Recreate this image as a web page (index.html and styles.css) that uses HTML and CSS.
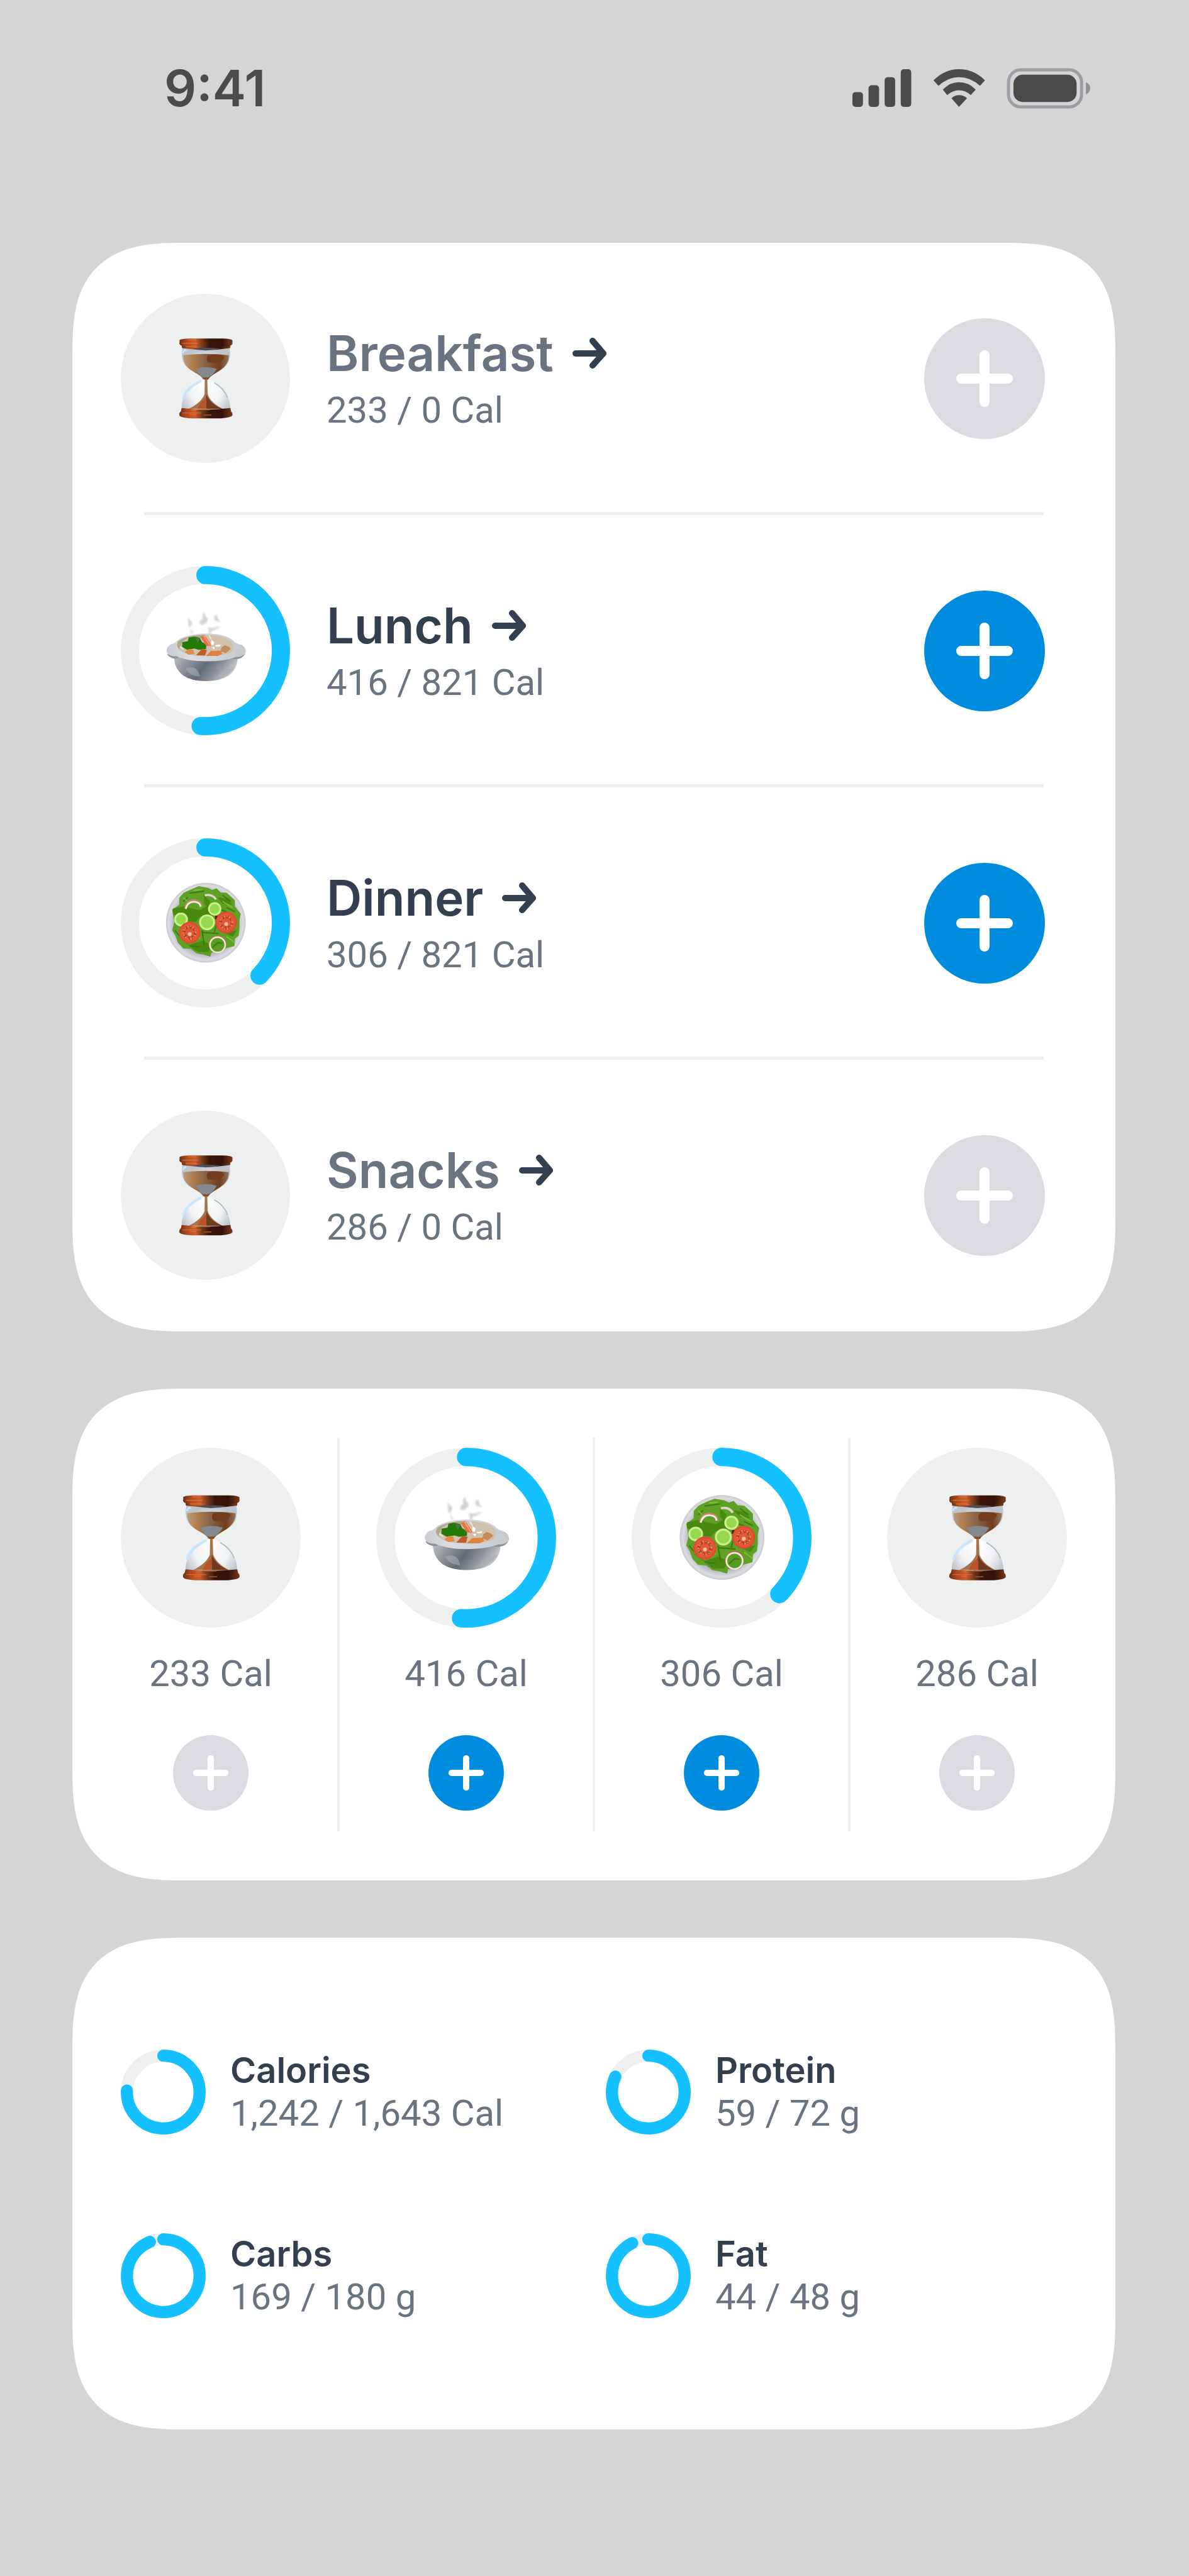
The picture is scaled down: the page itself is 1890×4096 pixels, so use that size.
FILE: index.html
```html
<!DOCTYPE html>
<html lang="en">
<head>
    <meta charset="UTF-8">
    <meta name="viewport" content="width=device-width, initial-scale=1.0">
    <title>Meals</title>
    <link rel="stylesheet" href="styles.css">
</head>
<body>
    <!-- Shared drawings -->
    <svg class="sprite" aria-hidden="true">
        <defs>
            <linearGradient id="wood" x1="0" x2="1" y1="0" y2="0">
                <stop offset="0" stop-color="#6b2f14"/>
                <stop offset="0.14" stop-color="#b04a20"/>
                <stop offset="0.3" stop-color="#cf5a2a"/>
                <stop offset="0.42" stop-color="#7a3d1c"/>
                <stop offset="0.56" stop-color="#3b160a"/>
                <stop offset="0.8" stop-color="#33110a"/>
                <stop offset="1" stop-color="#7a3a1c"/>
            </linearGradient>
            <linearGradient id="sand" x1="0" x2="1" y1="0" y2="0">
                <stop offset="0" stop-color="#b99b7c"/>
                <stop offset="0.2" stop-color="#b07e50"/>
                <stop offset="0.5" stop-color="#866045"/>
                <stop offset="0.8" stop-color="#6f3e1f"/>
                <stop offset="1" stop-color="#94745a"/>
            </linearGradient>
            <radialGradient id="glass" cx="0.5" cy="0.6" r="0.6">
                <stop offset="0" stop-color="#ffffff"/>
                <stop offset="0.6" stop-color="#f1f2f4"/>
                <stop offset="1" stop-color="#bfc4ca"/>
            </radialGradient>
            <linearGradient id="pot" x1="0" x2="1" y1="0" y2="0.3">
                <stop offset="0" stop-color="#bcc0c5"/>
                <stop offset="0.3" stop-color="#8b9096"/>
                <stop offset="0.55" stop-color="#636b77"/>
                <stop offset="0.8" stop-color="#92979d"/>
                <stop offset="1" stop-color="#c3c6ca"/>
            </linearGradient>
            <linearGradient id="rim" x1="0" x2="1" y1="0" y2="0">
                <stop offset="0" stop-color="#c9ccd2"/>
                <stop offset="0.3" stop-color="#dcdde3"/>
                <stop offset="1" stop-color="#c4c9cb"/>
            </linearGradient>
            <radialGradient id="plate" cx="0.5" cy="0.5" r="0.5">
                <stop offset="0.75" stop-color="#a9aeb6"/>
                <stop offset="0.93" stop-color="#dcdde3"/>
                <stop offset="1" stop-color="#c6c9cd"/>
            </radialGradient>
            <filter id="soft" x="-20%" y="-20%" width="140%" height="140%">
                <feGaussianBlur stdDeviation="5"/>
            </filter>

            <g id="hourglass">
                <path d="M346 308 H574 C584 372 560 404 520 425 C495 440 478 452 474 462 C500 474 576 510 578 600 H342 C342 520 410 482 446 462 C440 448 424 438 400 424 C356 402 336 370 346 308 Z" fill="url(#glass)"/>
                <path d="M350 342 Q460 330 570 342 C572 386 540 410 510 427 C488 440 476 450 472 459 H446 C440 446 424 436 402 424 C364 402 348 380 350 342 Z" fill="url(#sand)"/>
                <path d="M470 342 Q530 334 548 350 Q540 374 510 378 H470 Q456 362 470 342 Z" fill="#713d1d"/>
                <path d="M410 408 Q460 392 512 408 Q500 430 482 444 Q460 458 436 444 Q420 430 410 408 Z" fill="#85898f"/>
                <path d="M446 450 H474 Q472 462 460 462 Q450 462 446 450 Z" fill="#8a4a25"/>
                <path d="M454 460 H466 L468 530 Q480 570 540 602 H376 Q440 570 453 530 Z" fill="#a6744c"/>
                <path d="M461 530 Q480 580 540 602 H462 Z" fill="#6e3b1e"/>
                <path d="M432 575 L460 548 L462 602 H420 Z" fill="#b95327"/>
                <path d="M351 550 Q362 504 432 468" fill="none" stroke="#c9e6fa" stroke-width="13" stroke-linecap="round"/>
                <path d="M500 476 Q548 502 564 548" fill="none" stroke="#a9b8c5" stroke-width="5"/>
                <path d="M348 333 Q350 316 366 318" fill="none" stroke="#c9e6fa" stroke-width="8"/>
                <path d="M342 296 H578 L577 308 Q460 326 344 308 Z" fill="url(#wood)"/>
                <path d="M390 310 Q460 302 530 310 Q460 328 390 310 Z" fill="#4b4f5a"/>
                <path d="M332 268 Q340 262 380 261 H540 Q584 262 588 270 V286 Q584 298 560 300 H360 Q334 298 331 286 Z" fill="url(#wood)"/>
                <path d="M372 268 H412 M345 284 H420 M362 300 H415" stroke="#e07a3c" stroke-width="5" opacity=".7"/>
                <path d="M342 598 Q460 612 578 598 L582 616 Q590 620 588 634 Q580 646 530 648 H390 Q336 646 331 634 Q328 622 338 614 Z" fill="url(#wood)"/>
                <path d="M388 610 H412 M384 630 H412 M345 622 H436" stroke="#de7a41" stroke-width="4" opacity=".7"/>
                <path d="M440 606 H482 M450 632 H486" stroke="#91542e" stroke-width="5"/>
            </g>

            <g id="soup">
                <g filter="url(#soft)" fill="#c6c6cf" opacity=".8">
                    <path d="M374 280 Q372 300 392 314 Q396 332 376 342 Q372 310 374 280 Z"/>
                    <path d="M388 340 Q386 356 400 370 L390 372 Q382 356 388 340 Z"/>
                    <path d="M452 266 Q438 282 446 298 Q426 312 430 326 Q450 334 466 312 Q474 296 456 288 Z"/>
                    <path d="M506 280 Q492 296 504 308 L534 318 Q512 300 514 282 Z"/>
                    <path d="M464 338 Q476 352 528 334 Q510 356 486 358 L484 376 L474 376 Q478 354 464 338 Z"/>
                </g>
                <path d="M305 480 H613 Q616 540 570 575 Q528 602 458 602 Q390 602 350 575 Q304 540 305 480 Z" fill="url(#pot)"/>
                <path d="M360 540 Q420 520 430 580 Q380 578 360 540 Z M500 590 Q540 550 600 530 Q570 585 500 590 Z" fill="#a9adb2" opacity=".6"/>
                <path d="M270 470 Q290 500 330 490 L310 478 Z M650 470 Q630 505 580 492 L610 480 Z" fill="#8c9198"/>
                <path d="M460 371 Q560 371 598 412 Q612 422 632 426 Q655 440 652 464 Q640 486 604 485 Q550 506 460 506 Q370 506 316 481 Q280 484 270 462 Q264 440 288 424 Q310 420 322 404 Q370 371 460 371 Z" fill="url(#rim)"/>
                <path d="M457 377 Q550 379 584 412 Q600 434 586 458 Q560 480 457 481 Q360 480 330 450 Q310 428 326 408 Q370 378 457 377 Z" fill="#cfc1ab"/>
                <path d="M326 408 Q370 378 457 377 L440 394 L380 388 L345 410 L330 448 Q312 428 326 408 Z" fill="#b3a48d"/>
                <path d="M345 413 L372 408 L376 390 L404 386 L430 392 L440 412 L462 424 L460 446 L424 450 L404 444 L368 450 L344 436 Z" fill="#237a0a"/>
                <path d="M408 394 L432 392 L420 418 Z" fill="#59714a"/>
                <path d="M433 387 L456 383 L484 424 L482 432 L460 430 Z" fill="#e96f45"/>
                <path d="M450 383 L478 428" stroke="#f5a27f" stroke-width="5"/>
                <path d="M358 462 L376 446 L398 450 L404 470 L376 474 Z" fill="#e08a45"/>
                <path d="M412 476 L440 446 L464 450 L456 478 Z" fill="#bf5d2b"/>
                <path d="M460 480 L484 456 L530 454 L540 470 L516 480 Z" fill="#de8440"/>
                <path d="M535 438 L550 428 L572 436 L580 446 L556 466 L530 458 Z" fill="#c78b59"/>
                <path d="M486 402 L500 412 L496 428 L484 424 Z M504 428 L530 424 L528 434 L508 434 Z M486 438 L502 436 L500 448 Z" fill="#fff"/>
                <path d="M474 380 L486 400 M334 436 L352 448" stroke="#e9e4dc" stroke-width="6"/>
            </g>

            <g id="salad">
                <circle cx="459" cy="453" r="193" fill="url(#plate)"/>
                <path d="M390 290 L425 276 L470 284 L490 294 L512 286 L530 306 L560 308 L580 326 L600 344 L600 374 L628 410 L622 440 L622 480 L618 516 L600 530 L598 566 L560 576 L530 590 L486 598 L482 618 L450 608 L414 602 L388 580 L350 578 L324 550 L312 516 L296 490 L306 450 L300 414 L296 390 L330 366 L330 332 L352 308 Z" fill="#5fa125"/>
                <path d="M300 384 L350 374 L430 392 L470 370 L520 400 L500 420 L430 424 L410 450 L370 446 L300 410 Z M514 330 L560 336 L590 366 L540 360 Z M320 520 L380 560 L440 540 L490 560 L470 594 L420 596 Z M540 500 L610 490 L590 520 Z M450 320 L480 350 L470 380 L450 360 Z" fill="#4a890f"/>
                <path d="M380 310 L450 300 M350 350 L372 330 M520 430 L500 500 M440 500 L520 506 M380 566 L430 570 M560 380 L600 400 M540 320 L580 350 M440 490 L452 560 M310 490 L330 516 M500 380 L560 400" fill="none" stroke="#3d7a10" stroke-width="6"/>
                <path d="M400 296 L440 292 M540 350 L590 380 M400 500 L430 530 M560 520 L600 550 M350 330 L370 350" fill="none" stroke="#7cbb3e" stroke-width="6"/>
                <path d="M360 384 Q368 344 404 346 Q436 350 438 376" fill="none" stroke="#c98865" stroke-width="12"/>
                <path d="M362 386 Q370 350 404 352 Q432 354 434 376" fill="none" stroke="#f3efec" stroke-width="8"/>
                <path d="M454 320 Q490 312 508 340" fill="none" stroke="#e4d2c8" stroke-width="11"/>
                <path d="M504 420 H522 V436 H504 Z" fill="#45180c"/>
                <g fill="#96d94f" stroke="#cdf08a" stroke-width="9">
                    <circle cx="502" cy="386" r="28"/>
                    <circle cx="339" cy="437" r="29"/>
                    <circle cx="465" cy="451" r="34"/>
                </g>
                <g id="tomato">
                    <circle cx="381" cy="501" r="48" fill="#e0583a" stroke="#e54a30" stroke-width="8"/>
                    <circle cx="381" cy="501" r="27" fill="none" stroke="#a9431f" stroke-width="14" stroke-dasharray="10 11"/>
                    <circle cx="381" cy="501" r="30" fill="none" stroke="#eeb069" stroke-width="5" stroke-dasharray="4 9"/>
                    <circle cx="381" cy="508" r="9" fill="#f6b99a"/>
                </g>
                <use href="#tomato" x="177" y="-49"/>
                <circle cx="516" cy="558" r="38" fill="none" stroke="#c5613c" stroke-width="10"/>
                <circle cx="516" cy="560" r="37" fill="#5a9b22" stroke="#ece5dc" stroke-width="8"/>
                <path d="M490 574 L516 550 L540 552" fill="none" stroke="#3d7a10" stroke-width="6"/>
            </g>

            <path id="arrow" d="M5 25 H49 M32 5 L49 25 L32 44" fill="none" stroke="#33404f" stroke-width="10" stroke-linecap="round" stroke-linejoin="round"/>
            <path id="plus" d="M96 59 V133 M59 96 H133" fill="none" stroke="#fff" stroke-width="16" stroke-linecap="round"/>
        </defs>
    </svg>

    <header class="status-bar">
        <span class="time">9:41</span>
        <svg class="status-icons" viewBox="0 0 385 66" role="img" aria-label="Signal, Wi-Fi and battery">
            <g fill="#4b4b4b">
                <rect x="0" y="39" width="17" height="24" rx="5"/>
                <rect x="26" y="28" width="17" height="35" rx="5"/>
                <rect x="52" y="15" width="17" height="48" rx="5"/>
                <rect x="78" y="2" width="17" height="61" rx="5"/>
                <path d="M131 20 Q149 2 172 2 Q196 2 214 20 L206 29 Q191 15 172 15 Q154 15 139 29 Z"/>
                <path d="M146 35 Q157 23 172 23 Q188 23 199 35 L191 44 Q183 36 172 36 Q162 36 153 44 Z"/>
                <path d="M160 49 Q165 44 172 44 Q180 44 185 49 L172 63 Z"/>
                <rect x="260" y="11" width="102" height="44" rx="15"/>
            </g>
            <rect x="252" y="3" width="118" height="60" rx="20" fill="none" stroke="#999fa5" stroke-width="5"/>
            <path d="M377 23 Q384 26 384 33 Q384 39 377 43 Z" fill="#8d9196"/>
        </svg>
    </header>

    <main class="cards">
        <!-- Meal list -->
        <section class="card meal-list">
            <div class="meal">
                <svg class="ring" viewBox="47 44 820 820"><circle class="ring-empty" cx="457" cy="454" r="410"/><use href="#hourglass"/></svg>
                <div class="meal-text">
                    <a class="meal-title muted" href="#breakfast">Breakfast <svg class="arrow" viewBox="0 0 54 49"><use href="#arrow"/></svg></a>
                    <p class="amount">233 / 0 Cal</p>
                </div>
                <button class="add" aria-label="Add breakfast" disabled><svg viewBox="0 0 192 192"><use href="#plus"/></svg></button>
            </div>
            <hr>
            <div class="meal">
                <svg class="ring" viewBox="47 44 820 820"><circle class="ring-track" cx="457" cy="454" r="366"/><circle class="ring-value" cx="457" cy="454" r="366" pathLength="100" stroke-dasharray="51 100"/><use href="#soup"/></svg>
                <div class="meal-text">
                    <a class="meal-title" href="#lunch">Lunch <svg class="arrow" viewBox="0 0 54 49"><use href="#arrow"/></svg></a>
                    <p class="amount">416 / 821 Cal</p>
                </div>
                <button class="add" aria-label="Add lunch"><svg viewBox="0 0 192 192"><use href="#plus"/></svg></button>
            </div>
            <hr>
            <div class="meal">
                <svg class="ring" viewBox="47 44 820 820"><circle class="ring-track" cx="457" cy="454" r="366"/><circle class="ring-value" cx="457" cy="454" r="366" pathLength="100" stroke-dasharray="37.3 100"/><use href="#salad"/></svg>
                <div class="meal-text">
                    <a class="meal-title" href="#dinner">Dinner <svg class="arrow" viewBox="0 0 54 49"><use href="#arrow"/></svg></a>
                    <p class="amount">306 / 821 Cal</p>
                </div>
                <button class="add" aria-label="Add dinner"><svg viewBox="0 0 192 192"><use href="#plus"/></svg></button>
            </div>
            <hr>
            <div class="meal">
                <svg class="ring" viewBox="47 44 820 820"><circle class="ring-empty" cx="457" cy="454" r="410"/><use href="#hourglass"/></svg>
                <div class="meal-text">
                    <a class="meal-title muted" href="#snacks">Snacks <svg class="arrow" viewBox="0 0 54 49"><use href="#arrow"/></svg></a>
                    <p class="amount">286 / 0 Cal</p>
                </div>
                <button class="add" aria-label="Add snacks" disabled><svg viewBox="0 0 192 192"><use href="#plus"/></svg></button>
            </div>
        </section>

        <!-- Compact meal columns -->
        <section class="card meal-columns">
            <div class="column">
                <svg class="ring" viewBox="47 44 820 820"><circle class="ring-empty" cx="457" cy="454" r="410"/><use href="#hourglass"/></svg>
                <p class="amount">233 Cal</p>
                <button class="add" aria-label="Add breakfast" disabled><svg viewBox="0 0 192 192"><use href="#plus"/></svg></button>
            </div>
            <div class="divider"></div>
            <div class="column">
                <svg class="ring" viewBox="47 44 820 820"><circle class="ring-track" cx="457" cy="454" r="368"/><circle class="ring-value" cx="457" cy="454" r="368" pathLength="100" stroke-dasharray="51 100"/><use href="#soup"/></svg>
                <p class="amount">416 Cal</p>
                <button class="add" aria-label="Add lunch"><svg viewBox="0 0 192 192"><use href="#plus"/></svg></button>
            </div>
            <div class="divider"></div>
            <div class="column">
                <svg class="ring" viewBox="47 44 820 820"><circle class="ring-track" cx="457" cy="454" r="368"/><circle class="ring-value" cx="457" cy="454" r="368" pathLength="100" stroke-dasharray="37.3 100"/><use href="#salad"/></svg>
                <p class="amount">306 Cal</p>
                <button class="add" aria-label="Add dinner"><svg viewBox="0 0 192 192"><use href="#plus"/></svg></button>
            </div>
            <div class="divider"></div>
            <div class="column">
                <svg class="ring" viewBox="47 44 820 820"><circle class="ring-empty" cx="457" cy="454" r="410"/><use href="#hourglass"/></svg>
                <p class="amount">286 Cal</p>
                <button class="add" aria-label="Add snacks" disabled><svg viewBox="0 0 192 192"><use href="#plus"/></svg></button>
            </div>
        </section>

        <!-- Daily totals -->
        <section class="card totals">
            <div class="total">
                <svg class="ring" viewBox="47 44 820 820"><circle class="ring-track" cx="457" cy="454" r="351"/><circle class="ring-value" cx="457" cy="454" r="351" pathLength="100" stroke-dasharray="75.6 100"/></svg>
                <div>
                    <h2>Calories</h2>
                    <p class="amount">1,242 / 1,643 Cal</p>
                </div>
            </div>
            <div class="total">
                <svg class="ring" viewBox="47 44 820 820"><circle class="ring-track" cx="457" cy="454" r="351"/><circle class="ring-value" cx="457" cy="454" r="351" pathLength="100" stroke-dasharray="81.9 100"/></svg>
                <div>
                    <h2>Protein</h2>
                    <p class="amount">59 / 72 g</p>
                </div>
            </div>
            <div class="total">
                <svg class="ring" viewBox="47 44 820 820"><circle class="ring-track" cx="457" cy="454" r="351"/><circle class="ring-value" cx="457" cy="454" r="351" pathLength="100" stroke-dasharray="93.9 100"/></svg>
                <div>
                    <h2>Carbs</h2>
                    <p class="amount">169 / 180 g</p>
                </div>
            </div>
            <div class="total">
                <svg class="ring" viewBox="47 44 820 820"><circle class="ring-track" cx="457" cy="454" r="351"/><circle class="ring-value" cx="457" cy="454" r="351" pathLength="100" stroke-dasharray="92.6 100"/></svg>
                <div>
                    <h2>Fat</h2>
                    <p class="amount">44 / 48 g</p>
                </div>
            </div>
        </section>
    </main>
</body>
</html>
```
FILE: styles.css
```css
/* General Styles */
* {
    box-sizing: border-box;
}

body {
    margin: 0;
    min-height: 100vh;
    background-color: #d5d5d5;
    font-family: Inter, sans-serif;
    color: #333f4f;
}

h2,
p {
    margin: 0;
}

svg {
    display: block;
    flex-shrink: 0;
}

.sprite {
    position: absolute;
    width: 0;
    height: 0;
}

/* Status Bar */
.status-bar {
    display: flex;
    justify-content: space-between;
    align-items: center;
    padding: 100px 156px 206px 261px;
    color: #4b4b4b;
}

.time {
    font-size: 80px;
    font-weight: 600;
    line-height: 80px;
}

.status-icons {
    width: 379px;
    height: 65px;
}

/* Cards */
.cards {
    display: flex;
    flex-direction: column;
    gap: 91px;
    padding: 0 117px 230px 115px;
}

.card {
    background-color: #fff;
    border-radius: 131px;
}

@supports (corner-shape: superellipse(1.5)) {
    .card {
        border-radius: 180px;
        corner-shape: superellipse(1.5);
    }
}

.amount {
    font-family: Roboto, sans-serif;
    font-size: 58px;
    line-height: 68px;
    color: #6a7380;
}

/* Progress Rings */
.ring-empty {
    fill: #edf0ef;
}

.ring-track,
.ring-value {
    fill: none;
    stroke: #edf0ef;
    stroke-width: 88;
}

.ring-value {
    stroke: #14c0ff;
    stroke-linecap: round;
    transform: rotate(-90deg);
    transform-origin: 457px 454px;
}

/* Add Buttons */
.add {
    flex-shrink: 0;
    width: 192px;
    height: 192px;
    padding: 0;
    border: none;
    border-radius: 50%;
    background-color: #008cde;
    cursor: pointer;
}

.add:disabled {
    background-color: #dbdce2;
    cursor: default;
}

.add svg {
    width: 100%;
    height: 100%;
}

/* Meal List */
.meal {
    display: flex;
    align-items: center;
    padding: 81px 112px 78px 77px;
}

.meal:last-child {
    padding-bottom: 82px;
}

.meal .ring {
    width: 269px;
    height: 269px;
}

.meal-text {
    flex: 1;
    margin-left: 58px;
    padding-bottom: 4px;
}

.meal-title {
    display: flex;
    align-items: center;
    gap: 30px;
    margin-bottom: 8px;
    font-size: 78px;
    font-weight: 600;
    line-height: 96px;
    color: #333f4f;
    text-decoration: none;
}

.meal-title.muted {
    color: #6a7380;
}

.arrow {
    width: 54px;
    height: 49px;
}

hr {
    height: 5px;
    margin: 0 114px;
    border: none;
    background-color: #efefef;
}

/* Meal Columns */
.meal-columns {
    display: flex;
    gap: 58px;
    padding: 78px 77px;
}

.column {
    flex: 1;
    display: flex;
    flex-direction: column;
    align-items: center;
    padding: 16px 0 33px;
}

.column .ring {
    width: 100%;
}

.column .ring-track,
.column .ring-value {
    stroke-width: 84;
}

.column .amount {
    margin: 39px 0 64px;
}

.column .add {
    width: 120px;
    height: 120px;
}

.divider {
    width: 4px;
    background-color: #efefef;
}

/* Totals */
.totals {
    display: grid;
    grid-template-columns: 1fr 1fr;
    gap: 156px 38px;
    padding: 177px 77px;
}

.total {
    display: flex;
    align-items: center;
    gap: 39px;
}

.total .ring {
    width: 135px;
    height: 135px;
}

.total .ring-track,
.total .ring-value {
    stroke-width: 117;
}

.total h2 {
    font-size: 56px;
    font-weight: 600;
    line-height: 68px;
}
```
